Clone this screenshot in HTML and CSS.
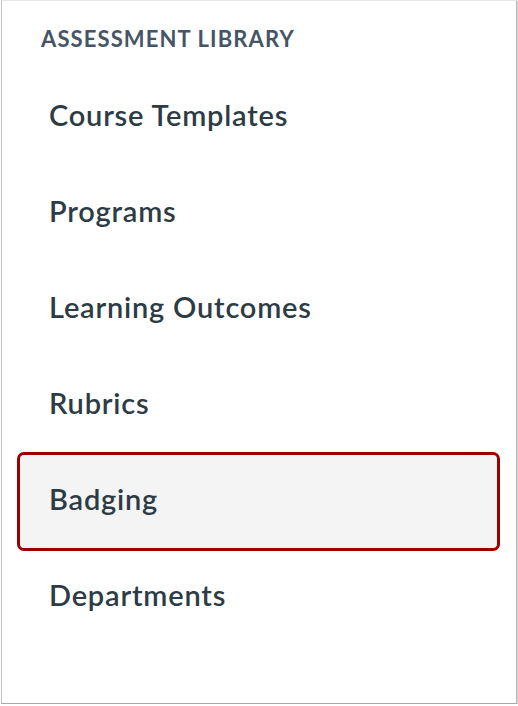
FILE: index.html
```html
<!DOCTYPE html>
<html>
<head>
<meta charset="utf-8">
<link rel="stylesheet" href="styles.css">
</head>
<body>
<div class="frame">
  <div class="heading">ASSESSMENT LIBRARY</div>
  <ul class="menu">
    <li class="item">Course Templates</li>
    <li class="item">Programs</li>
    <li class="item">Learning Outcomes</li>
    <li class="item">Rubrics</li>
    <li class="item active">Badging</li>
    <li class="item">Departments</li>
  </ul>
</div>
</body>
</html>
```
FILE: styles.css
```css
html, body {
  margin: 0;
  padding: 0;
  background: #ffffff;
}
body {
  padding-left: 1px;
  font-family: Lato, "Open Sans", sans-serif;
}
.frame {
  box-sizing: border-box;
  width: 516px;
  height: 704px;
  border-left: 1px solid #c4c4c4;
  border-top: 1px solid #e6e6e6;
  border-right: 1px solid #b8b8b8;
  border-bottom: 1px solid #a8a8a8;
  box-shadow: 1px 1px 1px rgba(0,0,0,0.18);
  padding: 26px 16px 0 15px;
}
.heading {
  padding-left: 24px;
  font-size: 22px;
  font-weight: 700;
  letter-spacing: 1.1px;
  color: #465565;
  line-height: 24px;
}
.menu {
  list-style: none;
  margin: 0;
  padding: 0;
  margin-top: 15px;
  display: flex;
  flex-direction: column;
}
.item {
  box-sizing: border-box;
  height: 96px;
  padding-left: 29px;
  display: flex;
  align-items: center;
  font-size: 29px;
  font-weight: 600;
  letter-spacing: 0.8px;
  color: #2d3b45;
  border: 3px solid transparent;
  border-radius: 7px;
}
.item.active {
  background: #f4f4f4;
  border-color: #990000;
  height: 99px;
  margin-top: 2px;
  margin-bottom: -5px;
  padding-bottom: 7px;
}
```
